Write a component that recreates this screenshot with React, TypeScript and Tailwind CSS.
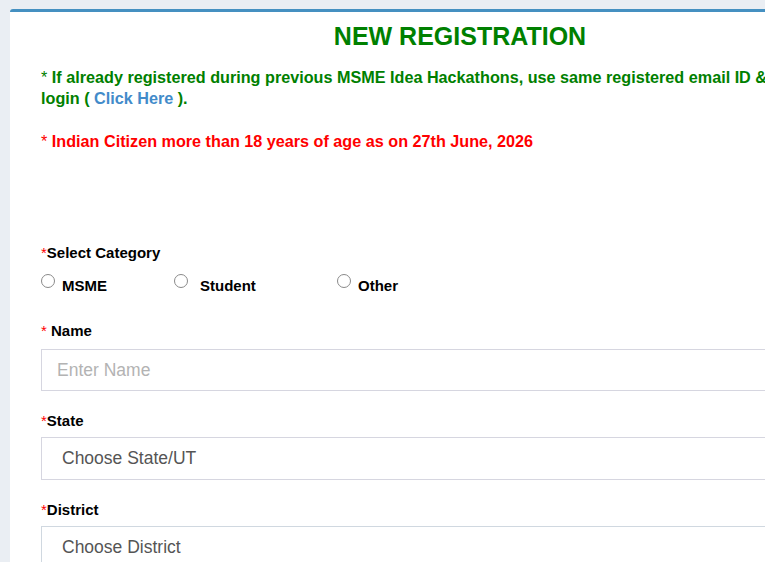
import React from "react";

const font = { fontFamily: '"Liberation Sans", Arial, sans-serif' };

function Radio({ label, className, gap }: { label: string; className?: string; gap: string }) {
  return (
    <label className={"flex items-start " + (className ?? "")}>
      <span className="mt-[-1px] block h-[14px] w-[14px] rounded-full border border-[#8a8a8a] bg-white" />
      <span className={gap + " mt-[1px] text-[15px] font-bold leading-[20px] text-black"}>{label}</span>
    </label>
  );
}

export default function App() {
  return (
    <div className="min-h-screen w-full overflow-hidden bg-[#eaeef3] pl-[10px] pt-[9px]" style={font}>
      <div className="w-[900px] rounded-tl-[3px] border-t-[3px] border-[#4590c1] bg-white px-[31px] pt-[9px] pb-[40px]">
        <h1 className="text-center text-[25px] font-bold leading-[30px] text-[#008000]">NEW REGISTRATION</h1>

        <p className="mt-[16px] text-[16.2px] font-bold leading-[21px] text-[#008000]">
          <span className="font-normal">*</span> If already registered during previous MSME Idea Hackathons, use same registered email ID &amp; password to
          <br />
          login ( <span className="text-[#428bca]">Click Here</span> ).
        </p>

        <p className="mt-[22px] text-[16.2px] font-bold leading-[21px] text-[#ff0000]">
          <span className="font-normal">*</span> Indian Citizen more than 18 years of age as on 27th June, 2026
        </p>

        <div className="mt-[91px] text-[15px] font-bold leading-[20px] text-black">
          <span className="font-normal text-[#ff0000]">*</span>Select Category
        </div>

        <div className="mt-[12px] flex">
          <Radio label="MSME" gap="ml-[7px]" className="w-[133px]" />
          <Radio label="Student" gap="ml-[12px]" className="w-[163px]" />
          <Radio label="Other" gap="ml-[7px]" />
        </div>

        <div className="mt-[25px] text-[15px] font-bold leading-[20px] text-black">
          <span className="font-normal text-[#ff0000]">*</span> Name
        </div>
        <input
          type="text"
          placeholder="Enter Name"
          className="mt-[8px] block h-[42px] w-full border border-[#d6d6e0] bg-white px-[15px] text-[17.5px] text-[#555] outline-none placeholder:text-[#b3b3b3]"
        />

        <div className="mt-[20px] text-[15px] font-bold leading-[20px] text-black">
          <span className="font-normal text-[#ff0000]">*</span>State
        </div>
        <div className="mt-[6px] flex h-[43px] w-full items-center border border-[#d6d6e0] bg-white pl-[20px] text-[17.5px] text-[#555]">
          Choose State/UT
        </div>

        <div className="mt-[20px] text-[15px] font-bold leading-[20px] text-black">
          <span className="font-normal text-[#ff0000]">*</span>District
        </div>
        <div className="mt-[6px] flex h-[43px] w-full items-center border border-[#d0d8e0] bg-white pl-[20px] text-[17.5px] text-[#555]">
          Choose District
        </div>
      </div>
    </div>
  );
}
